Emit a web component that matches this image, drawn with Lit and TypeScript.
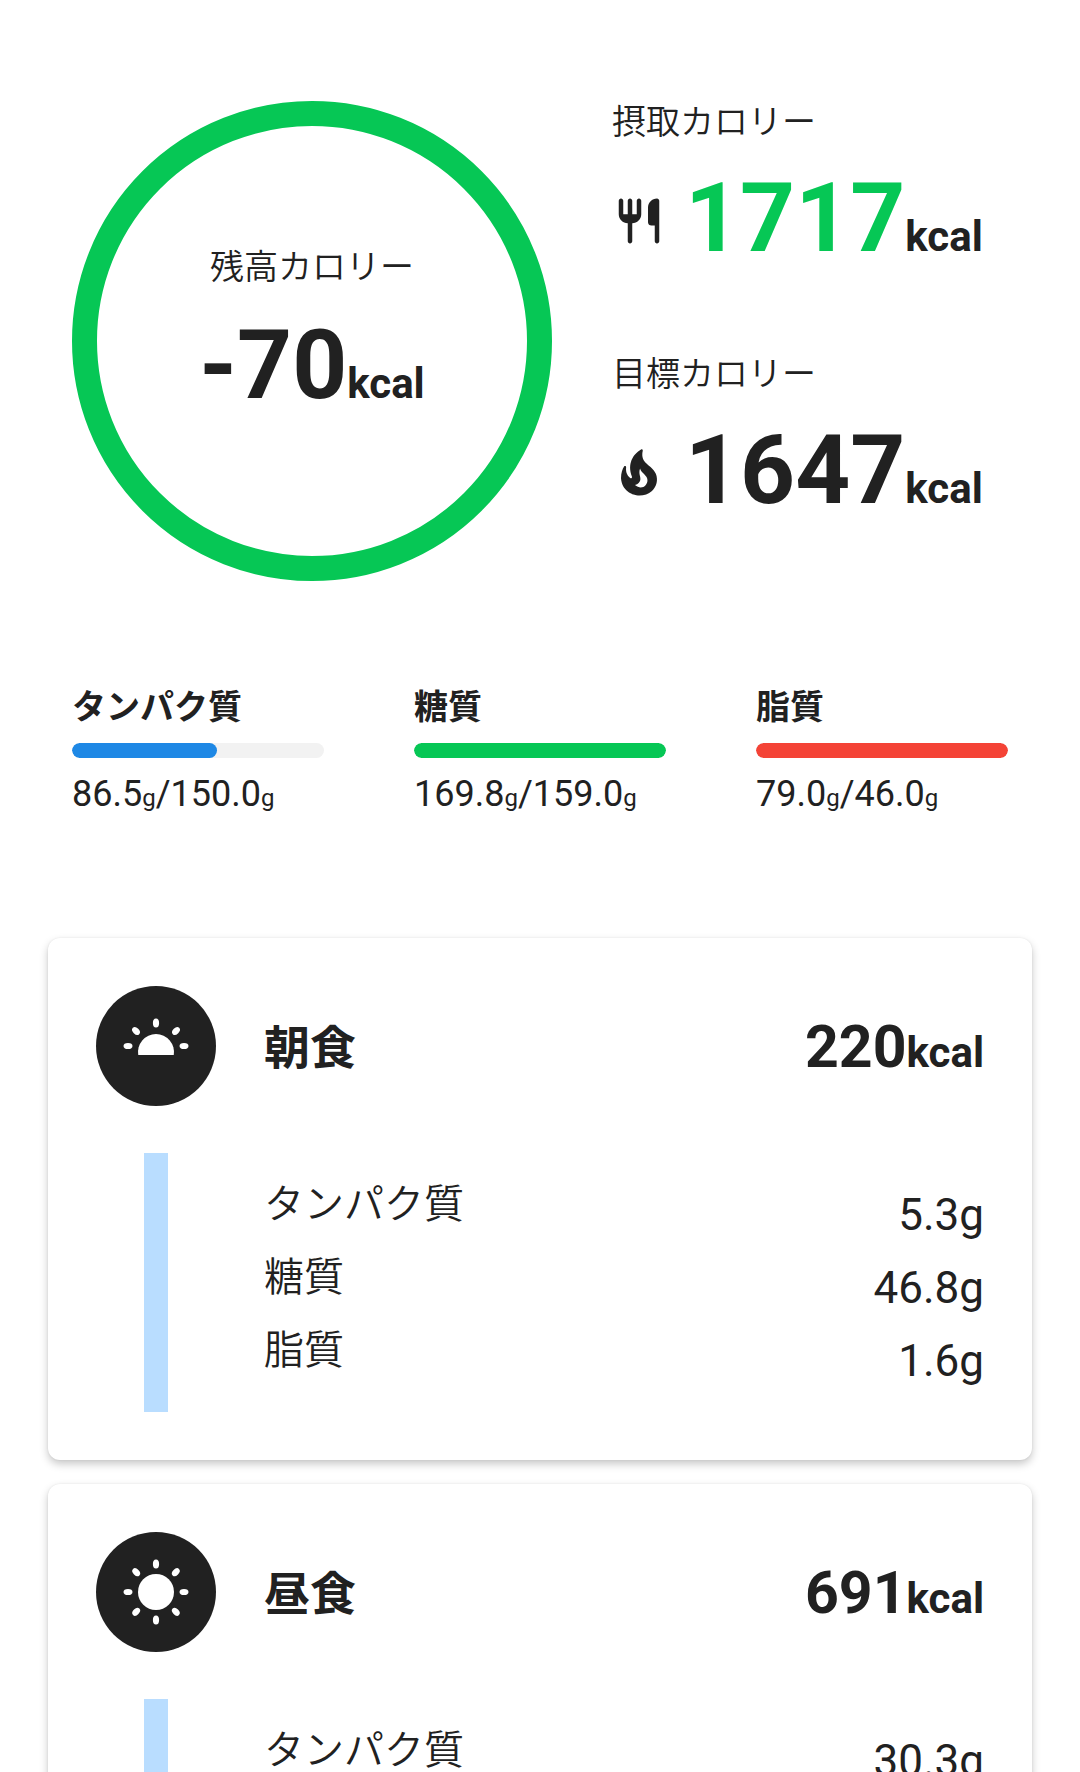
import { LitElement, html, css, svg } from 'lit';
import { customElement } from 'lit/decorators.js';

const macros = [
    { name: 'タンパク質', val: '86.5', goal: '150.0', pct: 57.7, color: '#1e88e5' },
    { name: '糖質', val: '169.8', goal: '159.0', pct: 100, color: '#06c755' },
    { name: '脂質', val: '79.0', goal: '46.0', pct: 100, color: '#f44336' },
];

const meals = [
    { name: '朝食', kcal: 220, icon: 'morning', p: '5.3g', c: '46.8g', f: '1.6g' },
    { name: '昼食', kcal: 691, icon: 'noon', p: '30.3g', c: '61.0g', f: '32.4g' },
];

// dots as [cx, cy, rotation]
const morningDots = [[32, 60, 0], [88, 60, 0], [60, 37, 90], [40, 45, 45], [80, 45, -45]];
const noonDots = [0, 45, 90, 135, 180, 225, 270, 315].map(a => {
    const r = (a * Math.PI) / 180;
    return [60 + 28 * Math.cos(r), 60 + 28 * Math.sin(r), a];
});

function sunIcon(kind: string) {
    const dots = kind === 'morning' ? morningDots : noonDots;
    return html`<svg class="sun" viewBox="0 0 120 120" fill="#fff">
        ${kind === 'morning'
            ? svg`<path d="M42.25 69a18 18 0 1 1 35.5 0z"/>`
            : svg`<circle cx="60" cy="60" r="18"/>`}
        ${dots.map(d => svg`<ellipse cx="${d[0]}" cy="${d[1]}" rx="4.5" ry="3.1" transform="rotate(${d[2]} ${d[0]} ${d[1]})"/>`)}
    </svg>`;
}

@customElement('app-root')
export class AppRoot extends LitElement {
    static styles = css`
    :host {
        display: block;
        height: 1772px;
        overflow: hidden;
        background: #fff;
        color: #212121;
        font-family: Roboto, 'Noto Sans CJK JP', sans-serif;
    }
    .summary {
        display: flex;
        gap: 60px;
        padding: 101px 0 0 72px;
    }
    .ring {
        box-sizing: border-box;
        width: 480px;
        height: 480px;
        border: 25px solid #06c755;
        border-radius: 50%;
        display: flex;
        flex-direction: column;
        align-items: center;
        padding-top: 116px;
    }
    .ring .label { margin-bottom: 17px; }
    .label {
        font-size: 34px;
        line-height: 50px;
        font-weight: 350;
        white-space: nowrap;
    }
    .num {
        font-size: 96px;
        line-height: 112px;
        font-weight: 700;
    }
    .unit {
        font-size: 42px;
        font-weight: 700;
    }
    .targets {
        display: flex;
        flex-direction: column;
        gap: 75px;
        margin-top: -4px;
    }
    .target .row {
        display: flex;
        align-items: center;
        margin-top: 15px;
    }
    .target svg {
        width: 54px;
        height: 54px;
        margin-top: 6px;
        fill: #212121;
        flex: none;
    }
    .target .num { margin-left: 19px; }
    .green { color: #06c755; }

    .macros {
        display: flex;
        gap: 90px;
        padding: 101px 0 0 72px;
    }
    .macro { width: 252px; }
    .macro-name {
        font-size: 34px;
        line-height: 50px;
        font-weight: 700;
    }
    .track {
        height: 15px;
        margin-top: 11px;
        border-radius: 8px;
        background: #f2f2f2;
        overflow: hidden;
    }
    .fill {
        height: 100%;
        border-radius: 8px;
    }
    .macro-val {
        font-size: 36px;
        line-height: 48px;
        font-weight: 400;
        margin-top: 12px;
        white-space: nowrap;
    }
    .macro-val small { font-size: 24px; }

    .meals {
        display: flex;
        flex-direction: column;
        gap: 24px;
        padding: 116px 48px 0;
    }
    .card {
        padding: 48px;
        border-radius: 12px;
        background: #fff;
        box-shadow: 0 4px 8px rgba(0, 0, 0, 0.22), 0 0 2px rgba(0, 0, 0, 0.08);
    }
    .head {
        display: flex;
        align-items: center;
    }
    .badge {
        width: 120px;
        height: 120px;
        border-radius: 50%;
        background: #212121;
        flex: none;
    }
    .sun { display: block; width: 120px; height: 120px; }
    .meal-name {
        margin-left: 48px;
        padding-bottom: 4px;
        font-size: 46px;
        font-weight: 700;
        flex: 1;
    }
    .meal-kcal {
        font-size: 59px;
        font-weight: 700;
    }
    .detail {
        display: flex;
        height: 259px;
        margin-top: 47px;
        padding-left: 48px;
    }
    .stripe {
        width: 24px;
        background: #b9ddff;
        flex: none;
    }
    .names {
        margin-left: 96px;
        padding-top: 15px;
        flex: 1;
        font-size: 40px;
        line-height: 73px;
        font-weight: 350;
    }
    .vals {
        padding-top: 26px;
        font-size: 44px;
        line-height: 73px;
        font-weight: 400;
        text-align: right;
    }
`;

    render() {
        return html`
            <div class="summary">
                <div class="ring">
                    <div class="label">残高カロリー</div>
                    <div><span class="num">-70</span><span class="unit">kcal</span></div>
                </div>
                <div class="targets">
                    <div class="target">
                        <div class="label">摂取カロリー</div>
                        <div class="row">
                            <svg viewBox="0 0 24 24"><path d="M11 9H9V3c0-.55-.45-1-1-1s-1 .45-1 1v6H5V3c0-.55-.45-1-1-1s-1 .45-1 1v6c0 2.21 1.79 4 4 4v8c0 .55.45 1 1 1s1-.45 1-1v-8c2.21 0 4-1.79 4-4V3c0-.55-.45-1-1-1s-1 .45-1 1v6zm5-3v6.5c0 .83.67 1.5 1.5 1.5H19v7c0 .55.45 1 1 1s1-.45 1-1V3c0-.55-.45-1-1-1-2.2 0-4 1.8-4 4z"/></svg>
                            <div><span class="num green">1717</span><span class="unit">kcal</span></div>
                        </div>
                    </div>
                    <div class="target">
                        <div class="label">目標カロリー</div>
                        <div class="row">
                            <svg viewBox="0 0 24 24"><path d="M19.48 12.35c-1.57-4.08-7.16-4.3-5.81-10.23.1-.44-.37-.78-.75-.55C9.29 3.71 6.68 8 8.87 13.62c.18.46-.36.89-.75.59-1.81-1.37-2-3.34-1.84-4.75.06-.52-.62-.77-.91-.34C4.69 10.16 4 11.84 4 14.37c.38 5.6 5.11 7.32 6.81 7.54 2.43.31 5.06-.14 6.95-1.87 2.08-1.93 2.84-5.01 1.72-7.69zm-9.28 5.03c1.44-.35 2.18-1.39 2.38-2.31.33-1.43-.96-2.83-.09-5.09.33 1.87 3.27 3.04 3.27 5.08.08 2.53-2.66 4.7-5.56 2.32z"/></svg>
                            <div><span class="num">1647</span><span class="unit">kcal</span></div>
                        </div>
                    </div>
                </div>
            </div>
            <div class="macros">
                ${macros.map(m => html`
                    <div class="macro">
                        <div class="macro-name">${m.name}</div>
                        <div class="track"><div class="fill" style="width:${m.pct}%;background:${m.color}"></div></div>
                        <div class="macro-val">${m.val}<small>g</small>/${m.goal}<small>g</small></div>
                    </div>`)}
            </div>
            <div class="meals">
                ${meals.map(m => html`
                    <div class="card">
                        <div class="head">
                            <div class="badge">${sunIcon(m.icon)}</div>
                            <div class="meal-name">${m.name}</div>
                            <div class="meal-kcal">${m.kcal}<span class="unit">kcal</span></div>
                        </div>
                        <div class="detail">
                            <div class="stripe"></div>
                            <div class="names">
                                <div>タンパク質</div><div>糖質</div><div>脂質</div>
                            </div>
                            <div class="vals">
                                <div>${m.p}</div><div>${m.c}</div><div>${m.f}</div>
                            </div>
                        </div>
                    </div>`)}
            </div>
        `;
    }
}
